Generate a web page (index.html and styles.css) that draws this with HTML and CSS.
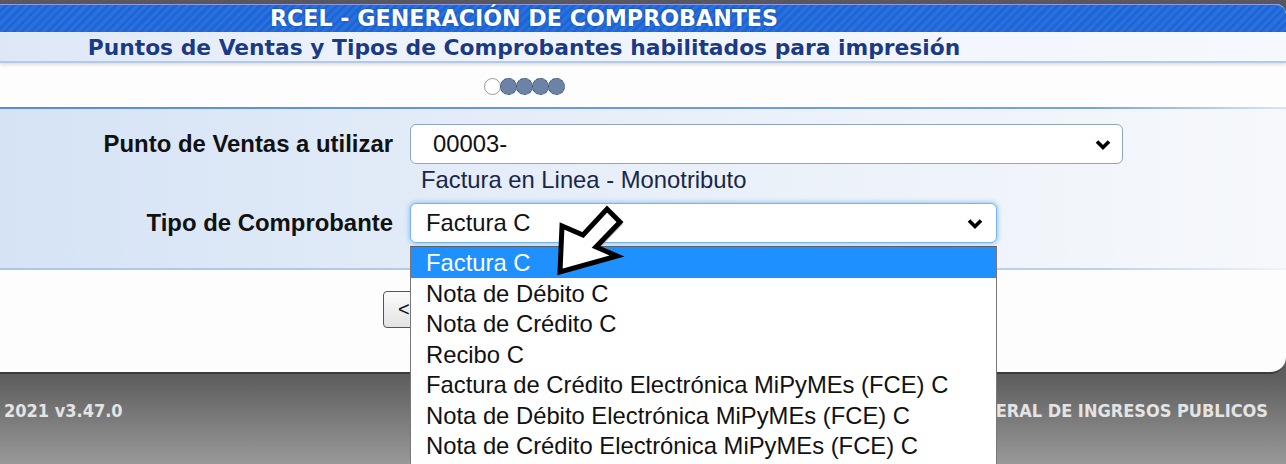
FILE: index.html
```html
<!DOCTYPE html>
<html lang="es">
<head>
<meta charset="utf-8">
<title>RCEL - Generación de Comprobantes</title>
<link rel="stylesheet" href="styles.css">
</head>
<body>
<div class="page">
  <div class="panel">
    <div class="title">RCEL - GENERACIÓN DE COMPROBANTES</div>
    <div class="subtitle">Puntos de Ventas y Tipos de Comprobantes habilitados para impresión</div>
    <div class="steps">
      <span class="dot empty"></span><span class="dot"></span><span class="dot"></span><span class="dot"></span><span class="dot"></span>
    </div>
    <div class="rule-blue"></div>
    <div class="form">
      <div class="row">
        <label class="label">Punto de Ventas a utilizar</label>
        <div class="select wide">
          <span>00003-</span>
          <svg class="chev" width="16" height="12" viewBox="0 0 16 12"><polyline points="2,2.5 8,8.5 14,2.5" fill="none" stroke="#000" stroke-width="3.6"/></svg>
        </div>
      </div>
      <div class="note">Factura en Linea - Monotributo</div>
      <div class="row second">
        <label class="label">Tipo de Comprobante</label>
        <div class="field">
          <div class="select focus">
            <span>Factura C</span>
            <svg class="chev" width="16" height="12" viewBox="0 0 16 12"><polyline points="2,2.5 8,8.5 14,2.5" fill="none" stroke="#000" stroke-width="3.6"/></svg>
          </div>
          <ul class="listbox">
            <li class="opt selected">Factura C</li>
            <li class="opt">Nota de Débito C</li>
            <li class="opt">Nota de Crédito C</li>
            <li class="opt">Recibo C</li>
            <li class="opt">Factura de Crédito Electrónica MiPyMEs (FCE) C</li>
            <li class="opt">Nota de Débito Electrónica MiPyMEs (FCE) C</li>
            <li class="opt">Nota de Crédito Electrónica MiPyMEs (FCE) C</li>
          </ul>
        </div>
      </div>
    </div>
    <div class="rule-light"></div>
    <div class="actions">
      <button class="btn">&lt;</button>
    </div>
  </div>
  <div class="footer">
    <span>2021 v3.47.0</span>
    <span>ADMINISTRACION FEDERAL DE INGRESOS PUBLICOS</span>
  </div>
  <svg class="pointer" width="100" height="90" viewBox="0 0 100 90">
    <polygon points="23,80 25,34 46,43 70,17 83,30 59,55 80,64" fill="#7a7a7a" opacity="0.45"/>
    <polygon points="20,78 22,32 43,41 67,15 80,28 56,53 77,62" fill="#fff" stroke="#000" stroke-width="5" stroke-linejoin="miter"/>
  </svg>
</div>
</body>
</html>
```

FILE: styles.css
```css
html, body {
  margin: 0;
  padding: 0;
}

body {
  width: 1286px;
  height: 464px;
  overflow: hidden;
  background: linear-gradient(to bottom, #56575f 0, #56575f 4px, #5c5c5c 374px, #999999 464px);
  font-family: "Liberation Sans", Arial, sans-serif;
}

.page {
  position: relative;
  width: 1286px;
  height: 464px;
}

.panel {
  margin-top: 4px;
  background: #fdfdfd;
  border-radius: 0 10px 16px 0;
  border-bottom: 2px solid #3b3b3b;
}

.title {
  height: 27px;
  border-top: 1px solid #8f98e6;
  border-top-right-radius: 10px;
  background-color: #1b66d8;
  background-image: repeating-linear-gradient(135deg, rgba(255,255,255,0.07) 0, rgba(255,255,255,0.07) 3px, rgba(0,0,0,0) 3px, rgba(0,0,0,0) 6px);
  color: #ffffff;
  font-family: "DejaVu Sans", Verdana, sans-serif;
  font-weight: bold;
  font-size: 22.2px;
  line-height: 27px;
  text-align: center;
  padding-right: 238px;
  text-shadow: 0 0 2px #0b3c94;
}

.subtitle {
  height: 29px;
  line-height: 31px;
  background: linear-gradient(to right, #dde7f6 0, #eef3fb 30%, #f5f8fd 100%);
  border-bottom: 2px solid #b3c9e8;
  box-shadow: 0 2px 3px rgba(0,0,0,0.12);
  color: #1a3a88;
  font-family: "DejaVu Sans", Verdana, sans-serif;
  font-weight: bold;
  font-size: 21.8px;
  text-align: center;
  padding-right: 238px;
  text-shadow: 0 0 2px #ffffff;
  position: relative;
}

.steps {
  height: 44px;
  display: flex;
  justify-content: center;
  align-items: center;
  padding-right: 238px;
  padding-top: 2px;
  box-sizing: border-box;
}

.dot {
  display: block;
  width: 15px;
  height: 15px;
  border-radius: 50%;
  background: #6c83a6;
  border: 1px dashed #3d5277;
  margin-left: -1px;
}

.dot.empty {
  background: #ffffff;
  border: 1px solid #9a9a9a;
  margin-left: 0;
}

.rule-blue {
  height: 2px;
  background: linear-gradient(to right, #5b8bd2 0, #78a4de 85%, #d9e5f5 100%);
}

.form {
  height: 159px;
  box-sizing: border-box;
  padding-top: 15px;
  background: linear-gradient(to right, #d5e3f5 0, #e3ecf8 35%, #eef3fa 70%, #f6f8fb 100%);
}

.row {
  display: grid;
  grid-template-columns: 393px auto;
  column-gap: 17px;
  align-items: center;
  justify-content: start;
}

.label {
  text-align: right;
  font-weight: bold;
  font-size: 23.9px;
  color: #111111;
}

.select {
  box-sizing: border-box;
  height: 40px;
  border: 1px solid #8ea5c6;
  border-radius: 6px;
  background: #ffffff;
  display: flex;
  align-items: center;
  justify-content: space-between;
  font-size: 23.8px;
  color: #111111;
  padding: 0 11px 0 22px;
}

.select.wide {
  width: 713px;
}

.select.focus {
  width: 587px;
  padding-left: 15px;
  padding-right: 13px;
  border-color: #79b3ec;
  box-shadow: 0 0 5px 1px #93c6f3;
}

.chev {
  display: block;
  margin-top: 1px;
}

.note {
  height: 32px;
  line-height: 32px;
  padding-left: 421px;
  margin-bottom: 7px;
  font-size: 23.8px;
  color: #1a2648;
}

.field {
  position: relative;
}

.listbox {
  position: absolute;
  left: 0;
  top: 43px;
  width: 587px;
  height: 240px;
  box-sizing: border-box;
  margin: 0;
  padding: 0;
  list-style: none;
  background: #ffffff;
  border: 1px solid #777777;
  border-top-color: #5e5e5e;
  z-index: 5;
}

.opt {
  height: 30.5px;
  line-height: 31px;
  padding-left: 15px;
  font-size: 23.8px;
  color: #111111;
  white-space: nowrap;
}

.opt.selected {
  background: #1e90ff;
  color: #ffffff;
}

.rule-light {
  height: 2px;
  background: linear-gradient(to right, #adc5e7 0, #bcd0ec 85%, #eef3fa 100%);
}

.actions {
  height: 102px;
  box-sizing: border-box;
  padding: 21px 0 0 383px;
  display: flex;
  align-items: flex-start;
}

.btn {
  width: 60px;
  height: 37px;
  padding: 0 0 0 14px;
  text-align: left;
  border: 1px solid #555555;
  border-radius: 4px;
  background: linear-gradient(to bottom, #fbfbfb, #e3e3e3);
  font-family: "Liberation Sans", Arial, sans-serif;
  font-size: 20px;
  color: #111111;
}

.footer {
  height: 90px;
  box-sizing: border-box;
  padding: 27px 18px 0 4px;
  display: flex;
  justify-content: space-between;
  align-items: flex-start;
  font-family: "DejaVu Sans Condensed", "DejaVu Sans", sans-serif;
  font-weight: bold;
  font-size: 18px;
  line-height: 20px;
  color: #e4e4e4;
}

.pointer {
  position: absolute;
  left: 540px;
  top: 190px;
  z-index: 10;
}
```
